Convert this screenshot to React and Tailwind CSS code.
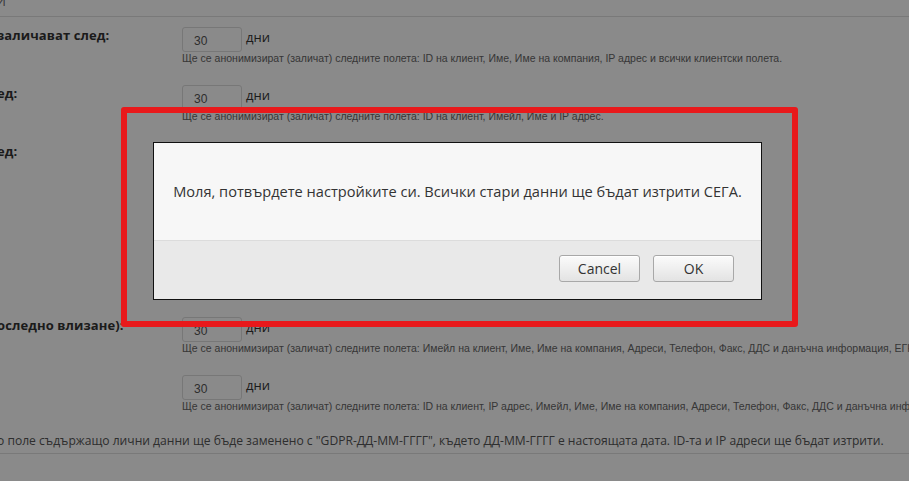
export default function App()
{
  const rows = [
    {
      label: "заличават след:",
      help: "Ще се анонимизират (заличат) следните полета: ID на клиент, Име, Име на компания, IP адрес и всички клиентски полета.",
      h: "h-[58px]",
    },
    {
      label: "ед:",
      help: "Ще се анонимизират (заличат) следните полета: ID на клиент, Имейл, Име и IP адрес.",
      h: "h-[58px]",
    },
    {
      label: "ед:",
      help: "",
      h: "h-[174px]",
    },
    {
      label: "оследно влизане):",
      help: "Ще се анонимизират (заличат) следните полета: Имейл на клиент, Име, Име на компания, Адреси, Телефон, Факс, ДДС и данъчна информация, ЕГН, Персонализирани полета",
      h: "h-[58px]",
    },
    {
      label: "",
      help: "Ще се анонимизират (заличат) следните полета: ID на клиент, IP адрес, Имейл, Име, Име на компания, Адреси, Телефон, Факс, ДДС и данъчна информация, ЕГН",
      h: "h-[58px]",
    },
  ]

  return (
    <div className="relative w-[909px] h-[481px] overflow-hidden bg-white font-['Open_Sans',sans-serif] text-[#333]">
      {/* Page under the dialog */}
      <div className="h-[17px] border-b border-[#e0e0e0] overflow-hidden">
        <span className="block -mt-[8px] -ml-[4px] text-[13px] text-[#666]">И</span>
      </div>

      <div className="pt-[10px]">
        {rows.map((r, i) => (
          <div key={i} className={`flex ${r.h}`}>
            <div className="w-[182px] shrink-0">
              <span className="block -mt-[1px] -ml-[3px] text-[13px] leading-[18px] font-bold tracking-[0.1px] whitespace-nowrap">
                {r.label}
              </span>
            </div>
            <div className="flex-1 min-w-0">
              <div className="flex items-start">
                <div className="w-[60px] h-[25px] border border-[#dcdcdc] rounded-[3px] bg-white pl-[11px] pt-[4px] text-[12px] text-[#555] font-['Liberation_Sans',sans-serif]">
                  30
                </div>
                <span className="ml-[4px] text-[13px] leading-[18px] pt-[1px]">дни</span>
              </div>
              <p className="text-[10.5px] leading-[13px] text-[#666] whitespace-nowrap font-['Liberation_Sans',sans-serif]">
                {r.help}
              </p>
            </div>
          </div>
        ))}
      </div>

      <p className="-mt-[1px] -ml-[3px] text-[12.1px] leading-[18px] text-[#555] whitespace-nowrap">
        о поле съдържащо лични данни ще бъде заменено с "GDPR-ДД-ММ-ГГГГ", където ДД-ММ-ГГГГ е настоящата дата. ID-та и IP адреси ще бъдат изтрити.
      </p>
      <div className="mt-[3px] h-[28px] border-t border-[#e0e0e0]"></div>
      <div className="border-t border-[#e0e0e0]"></div>

      {/* Dim overlay */}
      <div className="absolute inset-0 bg-black/[0.46]"></div>

      {/* Confirm dialog */}
      <div className="absolute left-[153px] top-[142px] w-[609px] border border-[#111] bg-[#f7f7f7]">
        <div className="h-[98px] flex items-center justify-center border-b border-[#dcdcdc] text-[14.6px] text-[#333]">
          Моля, потвърдете настройките си. Всички стари данни ще бъдат изтрити СЕГА.
        </div>
        <div className="h-[58px] bg-[#e9e9e9] flex justify-end items-start pt-[14px] pr-[27px] gap-[13px]">
          <button className="w-[81px] h-[27px] border border-[#a8a8a8] rounded-[3px] bg-gradient-to-b from-[#fbfbfb] to-[#e3e3e3] text-[14px] text-[#333] shadow-[inset_0_1px_0_#fff]">
            Cancel
          </button>
          <button className="w-[81px] h-[27px] border border-[#a8a8a8] rounded-[3px] bg-gradient-to-b from-[#fbfbfb] to-[#e3e3e3] text-[14px] text-[#333] shadow-[inset_0_1px_0_#fff]">
            OK
          </button>
        </div>
      </div>

      {/* Red highlight frame */}
      <div className="absolute left-[121px] top-[107px] w-[677px] h-[220px] border-[6px] border-[#e8191b] rounded-[3px]"></div>
    </div>
  )
}
